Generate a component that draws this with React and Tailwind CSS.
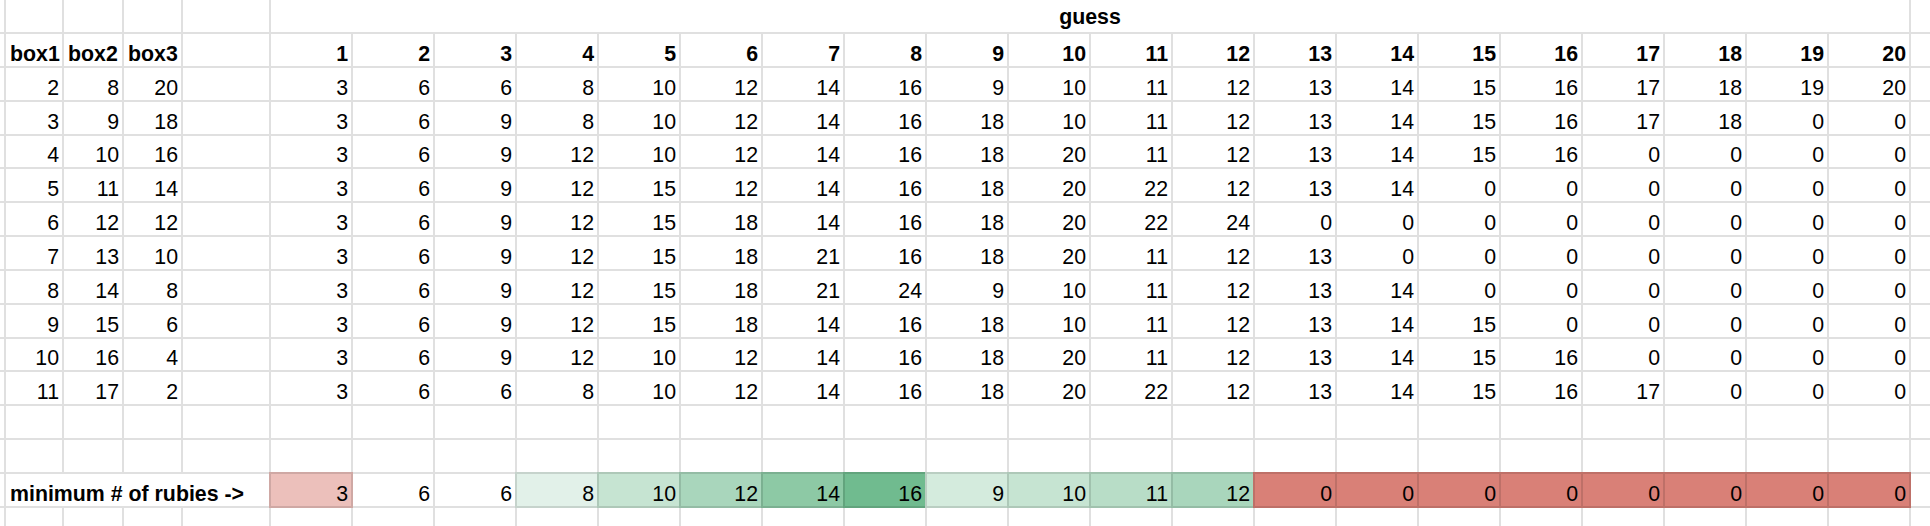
const guesses = Array.from({ length: 20 }, (_, i) => i + 1);

const boxes = [
  [2, 8, 20],
  [3, 9, 18],
  [4, 10, 16],
  [5, 11, 14],
  [6, 12, 12],
  [7, 13, 10],
  [8, 14, 8],
  [9, 15, 6],
  [10, 16, 4],
  [11, 17, 2],
];

// rubies you walk away with if you guess g for every box
const payout = (b, g) => g * b.filter((n) => n >= g).length;

const minimums = guesses.map((g) => Math.min(...boxes.map((b) => payout(b, g))));

// conditional formatting colours of the "minimum" row, one per guess
const minColors = [
  "bg-[#ecc0bb]",
  "",
  "",
  "bg-[#e2f1e9]",
  "bg-[#c6e4d2]",
  "bg-[#a9d6bc]",
  "bg-[#8dc9a5]",
  "bg-[#70bb8f]",
  "bg-[#d4ebdd]",
  "bg-[#c6e4d2]",
  "bg-[#b8ddc7]",
  "bg-[#a9d6bc]",
  "bg-[#d98077]",
  "bg-[#d98077]",
  "bg-[#d98077]",
  "bg-[#d98077]",
  "bg-[#d98077]",
  "bg-[#d98077]",
  "bg-[#d98077]",
  "bg-[#d98077]",
];

const line = "border-[rgba(0,0,0,0.12)]";

const Cell = ({ children, className = "" }) => (
  <div
    className={`border-r-2 border-b-2 ${line} flex items-end overflow-hidden whitespace-nowrap leading-[24px] ${className}`}
  >
    {children}
  </div>
);

const Num = ({ children, className = "" }) => (
  <Cell className={`justify-end pr-[3px] ${className}`}>{children}</Cell>
);

const Text = ({ children, className = "" }) => (
  <Cell className={`pl-[4px] ${className}`}>{children}</Cell>
);

const Last = () => <div className={`border-b-2 ${line}`}></div>;

const BlankRow = () => (
  <>
    <Cell />
    <Cell />
    <Cell />
    <Cell />
    <Cell />
    {guesses.map((g) => (
      <Cell key={g} />
    ))}
    <Last />
  </>
);

const App = () => {
  return (
    <div className="w-[1930px] h-[526px] overflow-hidden bg-white text-black font-['Liberation_Sans',Arial,sans-serif] text-[21.33px]">
      <div className="grid grid-cols-[6px_58px_60px_59px_88px_repeat(20,82px)_1fr] grid-rows-[34px_repeat(14,33.857px)_34px]">
        {/* title row */}
        <Cell />
        <Cell />
        <Cell />
        <Cell />
        <Cell />
        <Cell className="col-span-20 justify-center font-bold pb-[3px]">guess</Cell>
        <Last />

        {/* header row */}
        <Cell />
        <Text className="font-bold">box1</Text>
        <Text className="font-bold">box2</Text>
        <Text className="font-bold">box3</Text>
        <Cell />
        {guesses.map((g) => (
          <Num key={g} className="font-bold">
            {g}
          </Num>
        ))}
        <Last />

        {boxes.map((b, i) => (
          <div key={i} className="contents">
            <Cell />
            <Num>{b[0]}</Num>
            <Num>{b[1]}</Num>
            <Num>{b[2]}</Num>
            <Cell />
            {guesses.map((g) => (
              <Num key={g}>{payout(b, g)}</Num>
            ))}
            <Last />
          </div>
        ))}

        <BlankRow />
        <BlankRow />

        {/* minimum row */}
        <Cell />
        <Text className="col-span-4 font-bold">minimum # of rubies -&gt;</Text>
        {minimums.map((m, i) =>
          minColors[i] ? (
            <Num key={i} className={`-ml-[2px] -mt-[2px] border-2 ${minColors[i]}`}>
              {m}
            </Num>
          ) : (
            <Num key={i}>{m}</Num>
          )
        )}
        <Last />

        <BlankRow />
      </div>
    </div>
  );
};

export default App;
